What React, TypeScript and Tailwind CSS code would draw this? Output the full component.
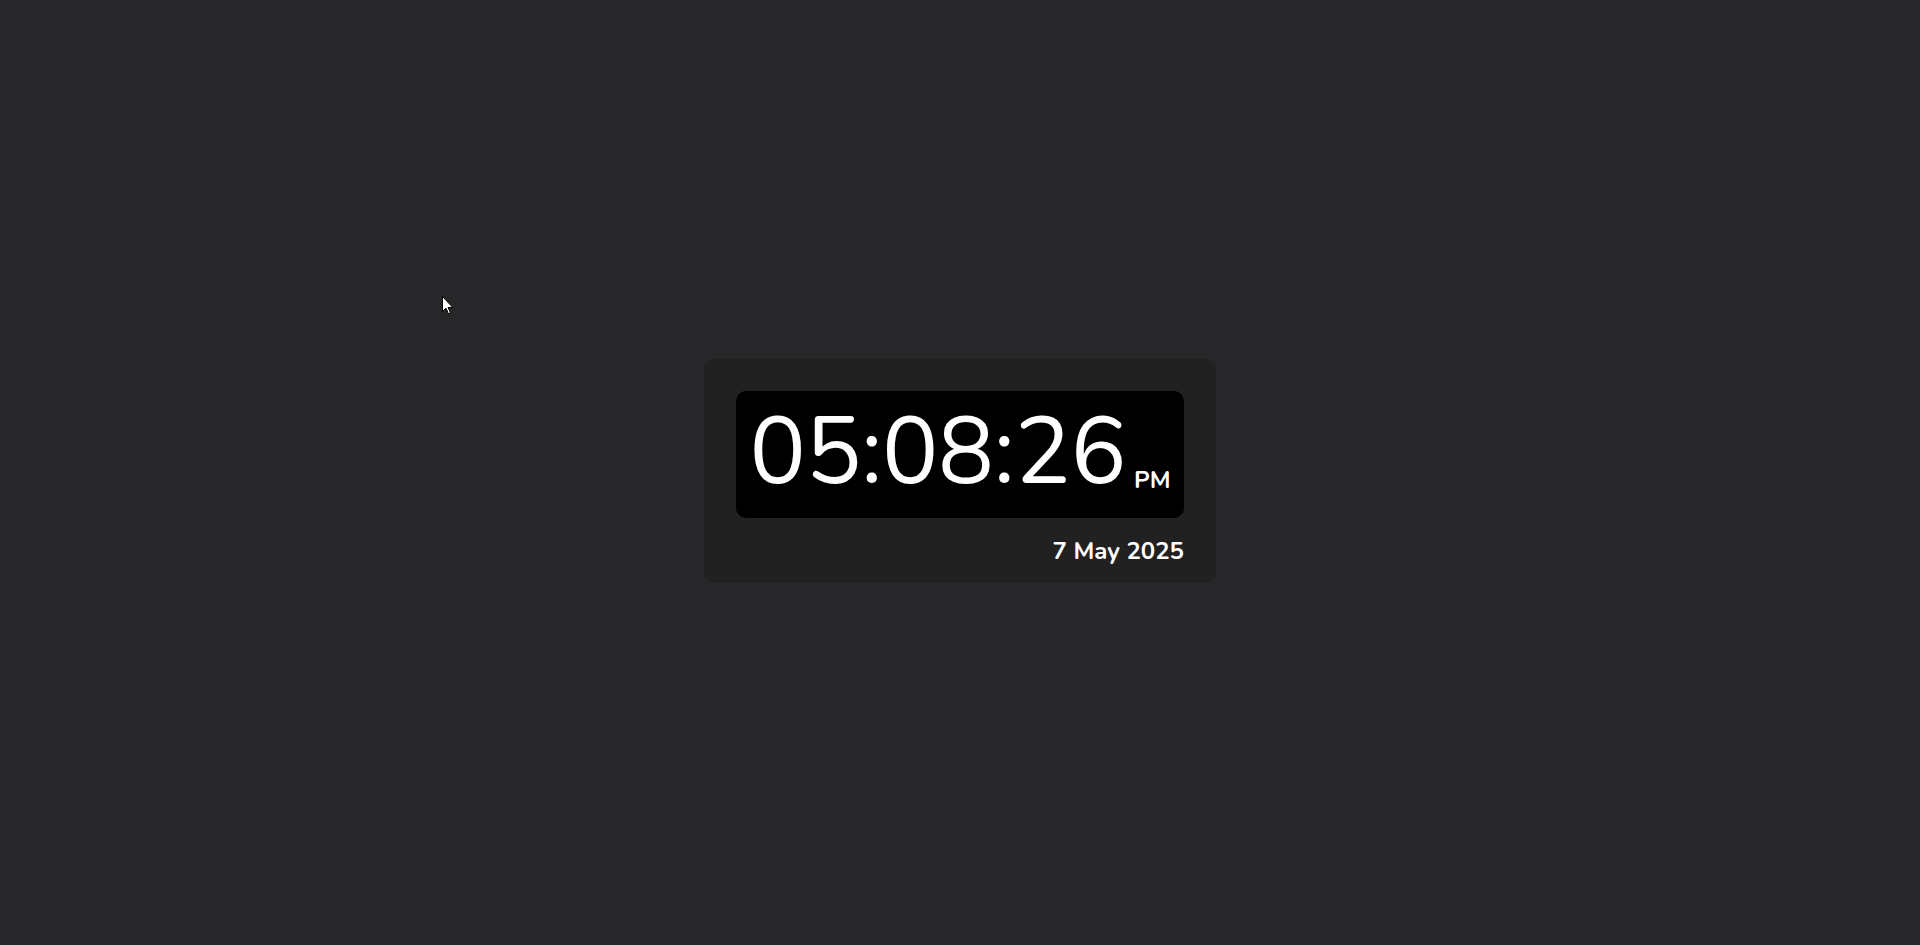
import React from "react";

export default function App() {
  return (
    <div
      className="relative flex h-screen w-full items-center justify-center bg-[#27272a]"
      style={{ fontFamily: "Nunito, Lato, 'Open Sans', sans-serif" }}
    >
      <svg
        className="absolute left-[442px] top-[296px]"
        width="12"
        height="19"
        viewBox="0 0 12 19"
      >
        <path
          d="M0.5 0.5 L0.5 15.5 L4 12.2 L6.6 18 L8.6 17.1 L6.1 11.5 L10.8 11.5 Z"
          fill="#ffffff"
          stroke="#000000"
          strokeWidth="1"
          strokeLinejoin="round"
        />
      </svg>

      <div className="mb-[3px] flex flex-col rounded-xl bg-[#212121] px-8 pt-8 pb-4">
        <div className="flex h-[127px] w-[448px] items-start justify-center rounded-[10px] bg-black pt-[14px]">
          <span className="text-[94px] font-normal leading-none tracking-[-0.6px] text-white">
            05:08:26
          </span>
          <span className="ml-2 mt-[63px] text-2xl font-bold leading-none text-white">
            PM
          </span>
        </div>
        <div className="mt-[17px] text-right text-2xl font-bold text-white">
          7 May 2025
        </div>
      </div>
    </div>
  );
}
